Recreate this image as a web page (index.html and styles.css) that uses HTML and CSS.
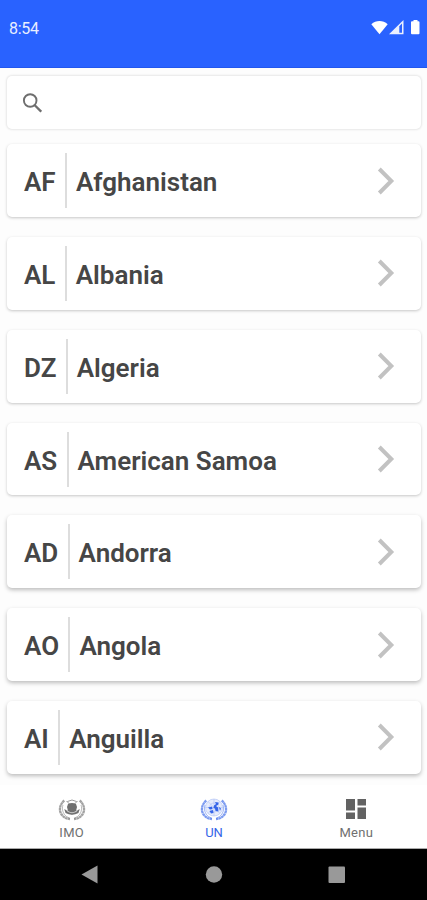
FILE: index.html
```
<!DOCTYPE html>
<html lang="en">
<head>
<meta charset="utf-8">
<title>Countries</title>
<link rel="stylesheet" href="styles.css">
</head>
<body>
<svg class="defs" aria-hidden="true">
  <symbol id="chevron" viewBox="0 0 18 28"><path d="M2.300 2 14.300 14 2.300 26" fill="none" stroke="currentColor" stroke-width="4"/></symbol>
  <symbol id="laurel" viewBox="0 0 28 24">
    <g fill="none" stroke="currentColor">
      <path d="M6.300 2.500C1 7 .7 14 4.500 17.500 6.500 20 9 20.800 12 21M21.700 2.500C27 7 27.300 14 23.500 17.500 21.500 20 19 20.800 16 21" stroke-width="2.300" stroke-dasharray="2.600 .3" opacity=".65"/>
      <path d="M5 7C3.500 11 5 16 8.500 18.500L12 20.500M23 7C24.500 11 23 16 19.500 18.500L16 20.500" stroke-width=".8" opacity=".6"/>
    </g>
  </symbol>
</svg>
<header class="status">
  <span class="time">8:54</span>
  <svg class="signals" width="50" height="16" viewBox="0 0 50 16" fill="#fff">
    <path d="M.3 4.300C5-.1 12-.1 16.700 4.300L8.500 14.300Z"/>
    <path d="M32.500 0V14.300H18Z" opacity=".9"/>
    <path d="M28.300 6.200 31 3.500V12.800H28.300Z" fill="#2962ff"/>
    <path d="M41 1.300H42.500V0H46.500V1.300H47.500Q48.500 1.300 48.500 2.300V13.300Q48.500 14.300 47.500 14.300H41Q40 14.300 40 13.300V2.300Q40 1.300 41 1.300Z"/>
  </svg>
</header>
<main>
  <div class="search">
    <svg width="20" height="20" viewBox="0 0 20 20" fill="none" stroke="#6e6e6e"><circle cx="8.200" cy="7.500" r="6.300" stroke-width="1.900"/><path d="M12.500 12 19.200 18.700" stroke-width="2.300"/></svg>
  </div>
  <ul class="list">
    <li class="card"><span class="code">AF</span><span class="name">Afghanistan</span><svg class="chev"><use href="#chevron"/></svg></li>
    <li class="card"><span class="code">AL</span><span class="name">Albania</span><svg class="chev"><use href="#chevron"/></svg></li>
    <li class="card"><span class="code">DZ</span><span class="name">Algeria</span><svg class="chev"><use href="#chevron"/></svg></li>
    <li class="card"><span class="code">AS</span><span class="name">American Samoa</span><svg class="chev"><use href="#chevron"/></svg></li>
    <li class="card deep"><span class="code">AD</span><span class="name">Andorra</span><svg class="chev"><use href="#chevron"/></svg></li>
    <li class="card deep"><span class="code">AO</span><span class="name">Angola</span><svg class="chev"><use href="#chevron"/></svg></li>
    <li class="card deep"><span class="code">AI</span><span class="name">Anguilla</span><svg class="chev"><use href="#chevron"/></svg></li>
  </ul>
</main>
<nav class="tabs">
  <a class="tab">
    <svg width="28" height="24" viewBox="0 0 28 24"><use href="#laurel"/><g fill="none" stroke="currentColor" stroke-width="1"><path d="M8.500 3 19.500 14M19.500 3 8.500 14M9.500 3.500Q14 .5 18.500 3.500M6.500 12Q14 20 21.500 12" opacity=".7"/></g><path d="M10 6Q14 4 18 6L19 9 18 13Q14 15.500 10 13L9 9ZM6.500 11 10 13.500 14 14.500 18 13.500 21.500 11 20.500 15Q14 18.500 7.500 15Z" fill="currentColor"/><path d="M9 13Q14 16.500 19 13" fill="none" stroke="#ddd" stroke-width=".7"/></svg>
    <span>IMO</span>
  </a>
  <a class="tab active">
    <svg width="28" height="24" viewBox="0 0 28 24"><use href="#laurel"/><g stroke="currentColor" stroke-width=".6" opacity=".4"><circle cx="14" cy="9.500" r="8.500" fill="currentColor" fill-opacity=".3"/><circle cx="14" cy="9.500" r="4.500" fill="none"/><path d="M14 1V18M5.500 9.500H22.500M8 3.500 20 15.500M20 3.500 8 15.500"/></g><path d="M15 4 18.500 4.500 18.500 6.500 16 8 18 9.500 18.500 13.500 15.500 13 15 10.500 13.500 10 14 7.500 16 6ZM8 9.500 12 8.500 12.500 11 10 11.500ZM9.500 13 13 12 13.500 15 11 15.500ZM19 9 21 10.500 20 13Z" fill="currentColor"/></svg>
    <span>UN</span>
  </a>
  <a class="tab">
    <svg width="28" height="24" viewBox="0 0 28 24" fill="#626262"><path d="M4 1h9v11.500H4zM15.500 1h8.500v6.500h-8.500zM4 14.500h9v6.500H4zM15.500 9.500h8.500v11.500h-8.500z"/></svg>
    <span>Menu</span>
  </a>
</nav>
<footer class="system">
  <svg width="427" height="51" viewBox="0 0 427 51" fill="#999"><path d="M81.500 25.500 97.500 16.500V34.500Z"/><circle cx="214" cy="25.500" r="8.200"/><rect x="328.500" y="17.500" width="16.500" height="16.500" rx="1"/></svg>
</footer>
</body>
</html>
```
FILE: styles.css
```
* { box-sizing: border-box; }
body {
  margin: 0;
  height: 900px;
  display: flex;
  flex-direction: column;
  background: #fdfdfd;
  color: #464646;
  font-family: Roboto, "Liberation Sans", sans-serif;
  overflow: hidden;
}
.defs { display: none; }
.status {
  height: 68px;
  flex: none;
  display: flex;
  justify-content: space-between;
  align-items: flex-start;
  padding: 20px 6px 0 9px;
  background: #2962ff;
  border-bottom: 1px solid #2257ee;
  color: #e8eeff;
}
.time { font-size: 16px; line-height: 17px; letter-spacing: -.3px; }
main { flex: none; height: 717px; padding: 7.500px 6px 0 7px; }
.search {
  height: 53px;
  padding: 17px 0 0 15px;
  border-radius: 5px;
  background: #fff;
  box-shadow: 0 0 2px 1px rgba(0,0,0,.09);
}
.search svg { display: block; }
.list {
  list-style: none;
  margin: 15.800px 0 0;
  padding: 0;
  display: grid;
  gap: 20px;
}
.card {
  height: 72.800px;
  display: flex;
  align-items: center;
  padding: 0 26px 0 17px;
  border-radius: 5px;
  background: #fff;
  box-shadow: 0 1px 3px rgba(0,0,0,.22);
  font-size: 26px;
  font-weight: 600;
}
.deep { box-shadow: 0 2px 4px rgba(0,0,0,.26); }
.code {
  height: 55px;
  line-height: 58px;
  padding-right: 9.300px;
  border-right: 2px solid #ddd;
}
.name { flex: 1; height: 55px; line-height: 58px; padding-left: 9px; }
.chev { width: 18px; height: 28px; color: #c2c2c2; }
.tabs {
  height: 64px;
  flex: none;
  display: grid;
  grid-template-columns: repeat(3, 1fr);
  background: #fff;
  border-bottom: 1px solid #aaa;
}
.tab {
  display: flex;
  flex-direction: column;
  align-items: center;
  gap: 3px;
  padding: 13px 0 0 1px;
  color: #707070;
  font-size: 13px;
  line-height: 16px;
  letter-spacing: .3px;
}
.tab svg { flex: none; }
.active { color: #3565e8; }
.active span { letter-spacing: 0; }
.system { height: 51px; flex: none; background: #000; }
.system svg { display: block; }
```
